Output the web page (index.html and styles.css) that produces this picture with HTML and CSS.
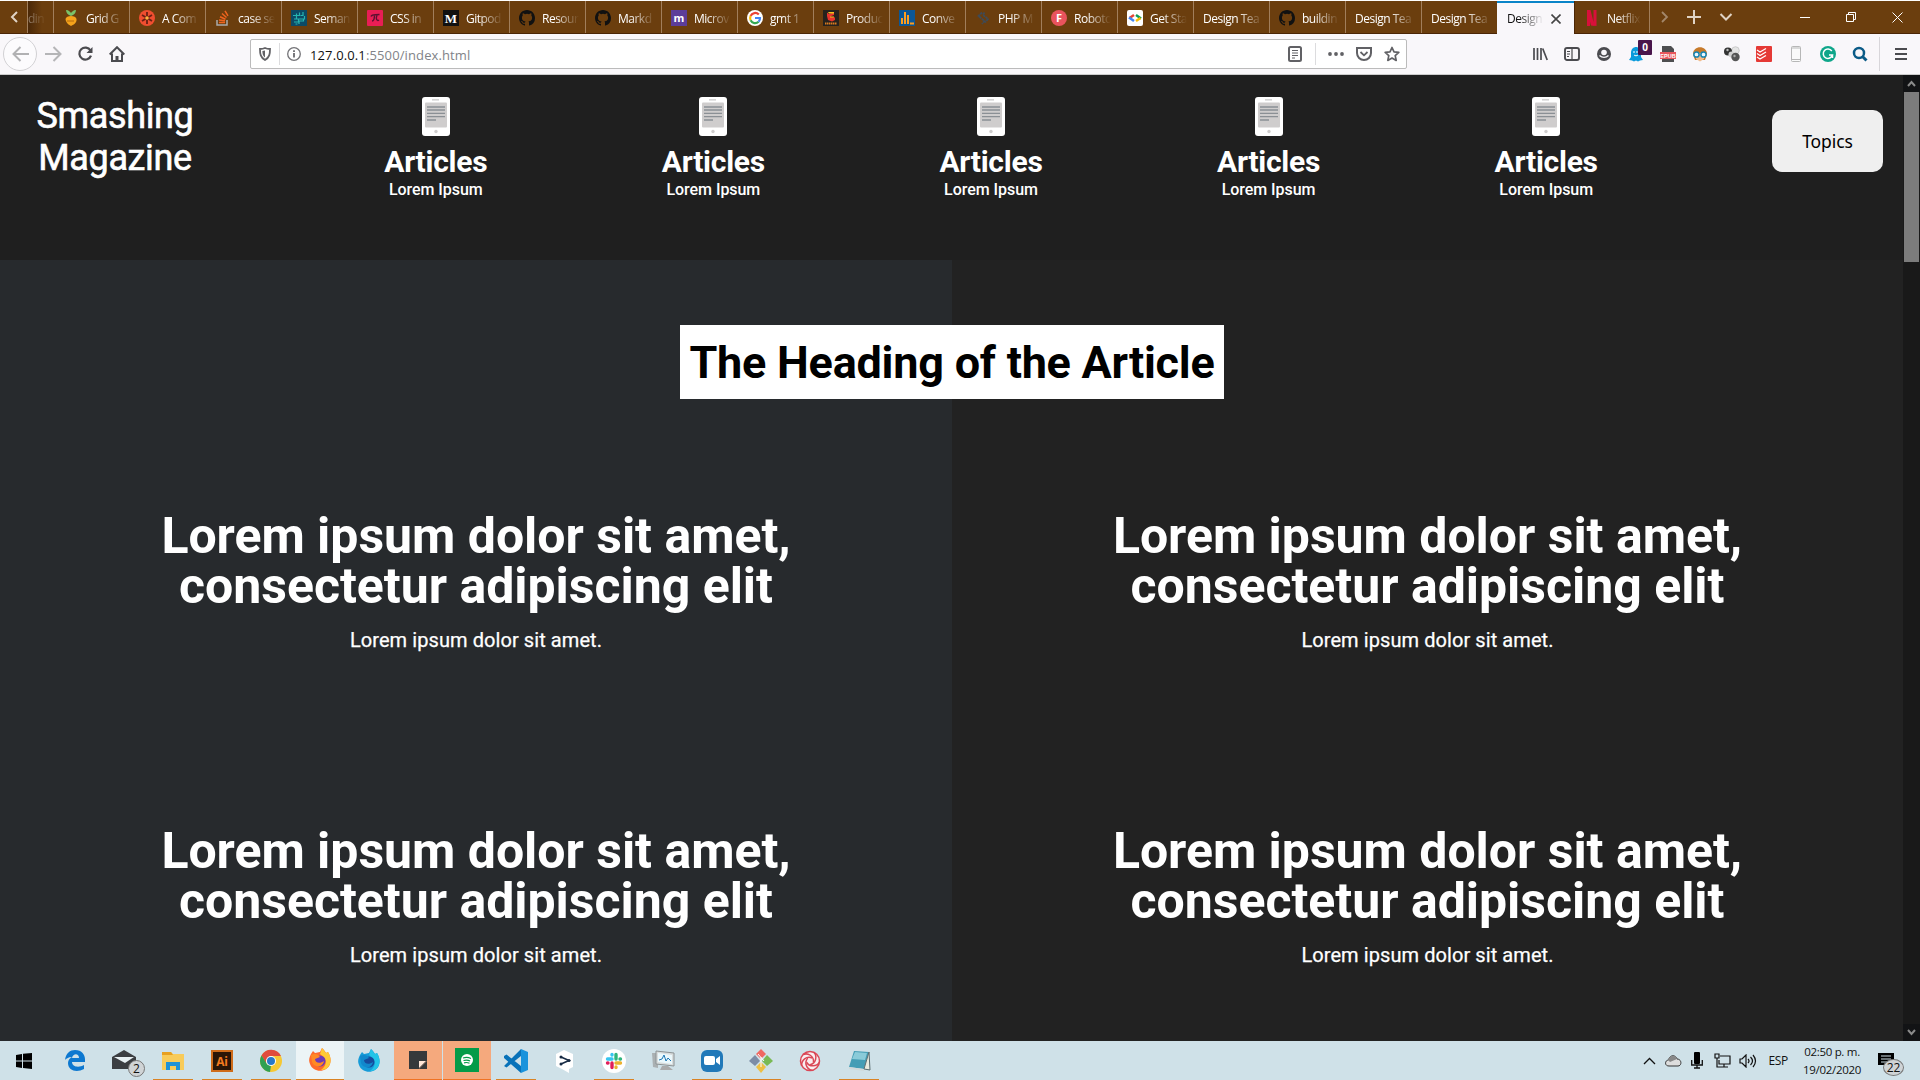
FILE: index.html
```html
<!DOCTYPE html>
<html lang="en">
<head>
<meta charset="utf-8">
<title>Design Team</title>
<link rel="stylesheet" href="styles.css">
</head>
<body>
<svg class="defs" aria-hidden="true">
  <symbol id="github" viewBox="0 0 16 16"><path fill="#111" d="M8 0C3.58 0 0 3.58 0 8c0 3.54 2.29 6.53 5.47 7.59.4.07.55-.17.55-.38 0-.19-.01-.82-.01-1.49-2.01.37-2.53-.49-2.69-.94-.09-.23-.48-.94-.82-1.13-.28-.15-.68-.52-.01-.53.63-.01 1.08.58 1.23.82.72 1.21 1.87.87 2.33.66.07-.52.28-.87.51-1.07-1.78-.2-3.64-.89-3.64-3.95 0-.87.31-1.59.82-2.15-.08-.2-.36-1.02.08-2.12 0 0 .67-.21 2.2.82a7.6 7.6 0 0 1 4 0c1.53-1.04 2.2-.82 2.2-.82.44 1.1.16 1.92.08 2.12.51.56.82 1.27.82 2.15 0 3.07-1.87 3.75-3.65 3.95.29.25.54.73.54 1.48 0 1.07-.01 1.93-.01 2.2 0 .21.15.46.55.38A8 8 0 0 0 16 8c0-4.42-3.58-8-8-8z"/></symbol>
  <symbol id="reader" viewBox="0 0 28 39"><rect width="28" height="39" rx="3" fill="#fff"/><rect x="3" y="5.500" width="22" height="25" rx="1" fill="#cfcdcd"/><path d="M5 10h18M5 13h18M5 16.300h18M5 19.600h18M5 23h9" stroke="#8b9095" stroke-width="1.300"/><rect x="10" y="2" width="7" height="1.600" fill="#d5d5d5"/><circle cx="14" cy="34.500" r="1.700" fill="#cfcdcd"/></symbol>
</svg>

<div class="tabs">
  <div class="tab-scroll"><svg width="8" height="12" viewBox="0 0 8 12"><path d="M7 1 2 6l5 5" fill="none" stroke="#e0d3c5" stroke-width="2"/></svg></div>
  <div class="tab cut"><span>din</span></div>
  <div class="tab"><svg viewBox="0 0 16 16"><path d="M8 6C5 5 3 3 3 0c3 0 4 2 5 3 1-1 2-3 5-3 0 3-2 5-5 6z" fill="#7ac36a"/><path d="M2.500 9C3 5 13 5 13.500 9S10 15 8 16c-2-1-5-3-5.500-7z" fill="#f5a31b"/><path d="M4 11h7" stroke="#b86b0c"/></svg><span>Grid G</span></div>
  <div class="tab"><svg viewBox="0 0 16 16"><circle cx="8" cy="8" r="8" fill="#f04e30"/><path d="M8 2v12M3 5l10 6M3 11l10-6" stroke="#6a2013" stroke-width="1.800"/><circle cx="8" cy="8" r="1.800" fill="#ffb23e"/></svg><span>A Com</span></div>
  <div class="tab"><svg viewBox="0 0 16 16"><path d="M2 10v5h10v-5" fill="none" stroke="#aaa" stroke-width="1.500"/><path d="M4 12.500h6M4 9.900l6 .9M5 6.700l5.500 2.500M7 3.500l4.500 4M10 .8l3 5" stroke="#f0641e" stroke-width="1.500"/></svg><span>case se</span></div>
  <div class="tab"><svg viewBox="0 0 16 16"><rect width="16" height="16" fill="#0c4a66"/><path d="M2 5.500h6.500V2.500M12 2v3.500H9.500M13.500 6v3H3M5.500 9V3.500M3 12h4.500V9M8 14v-3h4.500V9M4.500 14h2" fill="none" stroke="#26b5b0" stroke-width="1.200"/></svg><span>Seman</span></div>
  <div class="tab"><svg viewBox="0 0 16 16"><rect width="16" height="16" rx="1" fill="#e91e55"/><path d="M4 6.500C5 4 7 5 12.500 4.500M7.500 5c0 3-1 6-2.500 6m5-6c-1.500 4 0 6.500 2 5" fill="none" stroke="#5b1130" stroke-width="1.400"/></svg><span>CSS in</span></div>
  <div class="tab"><svg viewBox="0 0 16 16"><rect width="16" height="16" fill="#111"/><text x="8" y="12.500" class="serif">M</text></svg><span>Gitpod</span></div>
  <div class="tab"><svg><use href="#github"/></svg><span>Resour</span></div>
  <div class="tab"><svg><use href="#github"/></svg><span>Markd</span></div>
  <div class="tab"><svg viewBox="0 0 16 16"><rect width="16" height="16" fill="#5c3d99"/><text x="8" y="11.500" class="glyph">m</text></svg><span>Microv</span></div>
  <div class="tab"><svg viewBox="0 0 16 16"><circle cx="8" cy="8" r="8" fill="#fff"/><g fill="none" stroke-width="2.200"><path d="M11.800 4.500A5 5 0 0 0 3.600 6" stroke="#ea4335"/><path d="M3.600 6a5 5 0 0 0 0 4.300" stroke="#fbbc05"/><path d="M3.600 10.300a5 5 0 0 0 8 1.400" stroke="#34a853"/><path d="M11.600 11.700A5 5 0 0 0 13 8H8" stroke="#4285f4"/></g></svg><span>gmt 1</span></div>
  <div class="tab"><svg viewBox="0 0 16 16"><rect width="16" height="16" fill="#26221d"/><path d="M4 2.500 6 4l5-1.500V5L7 6.500l5 1V10l-3 1.500L5 10 4 6z" fill="#e7332b"/><path d="M5 2h6v1.500H6zM7 6.500h4v1H7z" fill="#f4c21f"/><path d="M2 13.500h12" stroke="#d97a20" stroke-width="2" stroke-dasharray="1.500 .5"/></svg><span>Produc</span></div>
  <div class="tab"><svg viewBox="0 0 16 16"><rect width="16" height="16" fill="#0b5796"/><path d="M3 14V8m3 6V2m3 12V5m2 8.500h4" stroke="#ff9d1d" stroke-width="2"/></svg><span>Conve</span></div>
  <div class="tab"><svg viewBox="0 0 16 16"><path d="M7 2.500 3.500 6l6 5-2.500 3M6 8 3.500 6M9.500 2.500 8 5l5 4-3 3.500" fill="none" stroke="#3e4b58" stroke-width="1.800" stroke-dasharray="2.500 .6"/></svg><span>PHP M</span></div>
  <div class="tab"><svg viewBox="0 0 16 16"><circle cx="8" cy="8" r="8" fill="#e9535c"/><text x="8" y="12" class="glyph">F</text></svg><span>Roboto</span></div>
  <div class="tab"><svg viewBox="0 0 16 16"><rect width="16" height="16" rx="2" fill="#fff"/><g stroke-width="2.500" fill="none"><path d="M7 5 2.500 8" stroke="#ea4335"/><path d="m2 7.500 5 3.500" stroke="#4285f4"/><path d="m9 5 5 3.500" stroke="#0f9d58"/><path d="M13.500 8 9 11" stroke="#fbbc05"/></g></svg><span>Get Sta</span></div>
  <div class="tab"><span>Design Tea</span></div>
  <div class="tab"><svg><use href="#github"/></svg><span>buildin</span></div>
  <div class="tab"><span>Design Tea</span></div>
  <div class="tab"><span>Design Tea</span></div>
  <div class="tab active"><span>Design</span><svg class="close" viewBox="0 0 10 10"><path d="m.5.500 9 9m0-9-9 9" stroke="#444" stroke-width="1.600"/></svg></div>
  <div class="tab"><svg viewBox="0 0 16 16"><path d="M3 0h3.500l4 16L7 15.500 3 0zM3 0h3v16l-3 .1zM9.500 0h3v16l-3-.4z" fill="#d8103a"/></svg><span>Netflix</span></div>
  <div class="tab-tools">
    <svg width="8" height="12" viewBox="0 0 8 12"><path d="m1 1 5 5-5 5" fill="none" stroke="#a3876a" stroke-width="1.800"/></svg>
    <svg width="14" height="14" viewBox="0 0 14 14"><path d="M7 0v14M0 7h14" stroke="#e0d3c5" stroke-width="2"/></svg>
    <svg width="14" height="8" viewBox="0 0 14 8"><path d="m1.500 1 5.500 5.500L12.500 1" fill="none" stroke="#e0d3c5" stroke-width="2"/></svg>
  </div>
  <div class="win">
    <svg width="11" height="11"><path d="M0 5.500h10" stroke="#fff"/></svg>
    <svg width="11" height="11"><path d="M.5 2.500h7v7h-7zM2.500 2V.5h7v7H8" fill="none" stroke="#fff"/></svg>
    <svg width="11" height="11"><path d="m.5.500 10 10m0-10-10 10" stroke="#fff"/></svg>
  </div>
</div>

<div class="toolbar">
  <div class="nav">
    <div class="back"><svg width="17" height="16" viewBox="0 0 17 16"><path d="M17 8H2m6.500-7L1.500 8l7 7" fill="none" stroke="#b1b1b3" stroke-width="2"/></svg></div>
    <svg width="17" height="16" viewBox="0 0 17 16"><path d="M0 8h15M8.500 1l7 7-7 7" fill="none" stroke="#b5b5b7" stroke-width="2"/></svg>
    <svg width="16" height="16" viewBox="0 0 16 16"><path d="M13.500 4.500A6 6 0 1 0 14 9.700" fill="none" stroke="#4b4b4f" stroke-width="2.200"/><path d="M15.500 1v6H9.500z" fill="#4b4b4f"/></svg>
    <svg width="16" height="16" viewBox="0 0 16 16"><path d="M.7 8.500 8 1.200l7.300 7.300M3 7.500V15h10V7.500" fill="none" stroke="#4b4b4f" stroke-width="2"/><path d="M6.500 15v-5h3v5z" fill="#4b4b4f"/></svg>
  </div>
  <div class="url">
    <svg width="12" height="14" viewBox="0 0 12 14"><path d="M1 2c2 0 3.500-.3 5-1 1.500.7 3 1 5 1 0 5-.5 8.500-5 11C1.500 10.500 1 7 1 2z" fill="none" stroke="#616165" stroke-width="1.800"/><path d="M6 3.500v7C3.800 9 3.400 7 3.400 4z" fill="#616165"/></svg>
    <i class="line"></i>
    <svg class="info" width="14" height="14" viewBox="0 0 14 14"><circle cx="7" cy="7" r="6.300" fill="none" stroke="#737377" stroke-width="1.300"/><path d="M7 6v4.500M7 3.300v1.600" stroke="#616165" stroke-width="1.700"/></svg>
    <p class="address">127.0.0.1<span>:5500/index.html</span></p>
    <div class="url-tools">
      <svg width="14" height="16" viewBox="0 0 14 16"><rect x="1" y="1" width="12" height="14" rx="1.500" fill="none" stroke="#616165" stroke-width="2"/><path d="M4 4.500h6M4 7h6M4 9.500h6M4 12h3" stroke="#616165"/></svg>
      <i class="line"></i>
      <svg width="16" height="4"><g fill="#616165"><circle cx="2" cy="2" r="1.900"/><circle cx="8" cy="2" r="1.900"/><circle cx="14" cy="2" r="1.900"/></g></svg>
      <svg width="16" height="14" viewBox="0 0 16 14"><path d="M1 1h14v5a7 7 0 0 1-14 0z" fill="none" stroke="#616165" stroke-width="2"/><path d="m4.500 5 3.500 3.300L11.500 5" fill="none" stroke="#616165" stroke-width="1.800"/></svg>
      <svg width="16" height="16" viewBox="0 0 16 16"><path d="m8 1.500 2 4.400 4.800.5-3.600 3.200 1 4.800L8 12l-4.200 2.400 1-4.800L1.200 6.400 6 5.900z" fill="none" stroke="#616165" stroke-width="1.700" stroke-linejoin="round"/></svg>
    </div>
  </div>
  <div class="extras">
    <svg viewBox="0 0 16 16"><path d="M2 2v12M5.500 2v12M9 2v12M10.700 2.500l4.500 11.500" stroke="#4b4b4f" stroke-width="1.700"/></svg>
    <svg viewBox="0 0 16 16"><rect x="1" y="2" width="14" height="12" rx="2" fill="none" stroke="#4b4b4f" stroke-width="1.900"/><path d="M8 2v12M3 5.500h3M3 8h3M3 10.500h2" stroke="#4b4b4f" stroke-width="1.200"/></svg>
    <svg viewBox="0 0 16 16"><circle cx="8" cy="8" r="7" fill="#4b4b4f"/><circle cx="8" cy="6.500" r="2.800" fill="#f9f7fa"/><path d="M3.500 9.500c2.500 2.600 6.500 2.600 9 0" fill="none" stroke="#f9f7fa" stroke-width="1.300"/></svg>
    <div class="ghost"><svg viewBox="0 0 16 16"><path d="M3 7c0-8 10-8 10 0v4l2 3-3 .5-2 1-2-1-2 1-2-1-3-.5 2-3z" fill="#0a9bdc"/><path d="M6 5v2M9 5v2M6 9c1 1 3 1 4 0" stroke="#fff" fill="none"/></svg><b>0</b></div>
    <svg viewBox="0 0 16 16"><path d="M2 0h9l3 3v13H2z" fill="#4e4e50"/><rect y="6" width="16" height="7" fill="#e8575d"/><text x="8" y="11.600" class="epub">EPUB</text></svg>
    <svg viewBox="0 0 16 16"><path d="M1 8c0-9 14-9 14 0l-2 6H3z" fill="#c77a2b"/><path d="M4 7h8v6l-4 2.500L4 13z" fill="#f2bd8d"/><circle cx="4.500" cy="8.500" r="2.600" fill="#e8f7ff" stroke="#1786b5" stroke-width="1.500"/><circle cx="11.500" cy="8.500" r="2.600" fill="#e8f7ff" stroke="#1786b5" stroke-width="1.500"/></svg>
    <svg viewBox="0 0 16 16"><circle cx="11.500" cy="4.500" r="3.800" fill="#e4e4e4" stroke="#aaa" stroke-width=".5"/><circle cx="4" cy="5.500" r="4" fill="#333"/><circle cx="7.500" cy="8.500" r="3" fill="#d2d2d2"/><circle cx="11.500" cy="11" r="4.200" fill="#555"/><circle cx="3.500" cy="4" r="1.200" fill="#bbb"/><circle cx="10.500" cy="10" r="1.200" fill="#aaa"/></svg>
    <svg viewBox="0 0 16 16"><rect width="16" height="16" rx="1" fill="#e53935"/><path d="m1 4 3 2 6-3.500M1 7.500l3 2L10 6M1 11l3 2 6-3.500" fill="none" stroke="#fff" stroke-width="1.300"/></svg>
    <svg viewBox="0 0 16 16"><rect x="3.500" y=".5" width="9" height="15" rx="1" fill="#fafafa" stroke="#b7b7b7"/><path d="M4 2h8M4 13.500h8" stroke="#b7b7b7"/></svg>
    <svg viewBox="0 0 16 16"><circle cx="8" cy="8" r="8" fill="#0fa68a"/><path d="M11.800 5A4.700 4.700 0 1 0 12.500 9H9m3.500 0v3" fill="none" stroke="#fff" stroke-width="1.500"/></svg>
    <svg viewBox="0 0 16 16"><circle cx="7" cy="7" r="5" fill="none" stroke="#0b5b87" stroke-width="2.500"/><path d="m10.500 10.500 4 4" stroke="#0b5b87" stroke-width="3"/></svg>
  </div>
  <div class="burger"><svg width="12" height="12"><path d="M0 1h12M0 6h12M0 11h12" stroke="#4b4b4f" stroke-width="1.800"/></svg></div>
</div>

<div class="viewport">
  <div class="page">
    <header>
      <h1>Smashing Magazine</h1>
      <nav>
        <div class="item"><svg><use href="#reader"/></svg><h3>Articles</h3><p>Lorem Ipsum</p></div>
        <div class="item"><svg><use href="#reader"/></svg><h3>Articles</h3><p>Lorem Ipsum</p></div>
        <div class="item"><svg><use href="#reader"/></svg><h3>Articles</h3><p>Lorem Ipsum</p></div>
        <div class="item"><svg><use href="#reader"/></svg><h3>Articles</h3><p>Lorem Ipsum</p></div>
        <div class="item"><svg><use href="#reader"/></svg><h3>Articles</h3><p>Lorem Ipsum</p></div>
      </nav>
      <button>Topics</button>
    </header>
    <main>
      <h2 class="heading">The Heading of the Article</h2>
      <section class="column slate">
        <article><h2>Lorem ipsum dolor sit amet, consectetur adipiscing elit</h2><p>Lorem ipsum dolor sit amet.</p></article>
        <article><h2>Lorem ipsum dolor sit amet, consectetur adipiscing elit</h2><p>Lorem ipsum dolor sit amet.</p></article>
      </section>
      <section class="column">
        <article><h2>Lorem ipsum dolor sit amet, consectetur adipiscing elit</h2><p>Lorem ipsum dolor sit amet.</p></article>
        <article><h2>Lorem ipsum dolor sit amet, consectetur adipiscing elit</h2><p>Lorem ipsum dolor sit amet.</p></article>
      </section>
    </main>
  </div>
  <div class="scrollbar">
    <svg viewBox="0 0 17 17"><path d="m5 11 3.500-4L12 11" fill="none" stroke="#8a8a8a" stroke-width="2"/></svg>
    <div class="thumb"></div>
    <svg viewBox="0 0 17 17"><path d="m5 6 3.500 4L12 6" fill="none" stroke="#8a8a8a" stroke-width="2"/></svg>
  </div>
</div>

<footer class="taskbar">
  <div class="app start"><svg viewBox="0 0 24 24"><path d="m4 6 6-1v6.500H4zM11 4.800 20 4v7.500h-9zM4 12.500h6V19l-6-1zM11 12.500h9V20l-9-.9z"/></svg></div>
  <div class="app"><svg viewBox="0 0 24 24"><path d="M2 11C3 4 7 1 12 1c7 0 10 5 10 9v3H9c0 5 7 6 12 3v4c-7 4-16 2-16-6 0-3 2-5 4-6-4 0-6 2-7 3zm7-2h7c0-5-6-5-7 0z" fill="#0d78d0"/></svg></div>
  <div class="app mail"><svg viewBox="0 0 24 24"><path d="M0 8 12 1l12 7v12H0z" fill="#3b3e42"/><path d="M2 8h20l-9 6z" fill="#e8f1f4"/></svg><b class="badge">2</b></div>
  <div class="app open"><svg viewBox="0 0 24 24"><path d="M1 3h9l2 2h11v16H1z" fill="#f8cb59"/><path d="M1 3h9l2 3H1z" fill="#e7a021"/><path d="M5 21v-8h14v8h-4v-4H9v4z" fill="#1f92d6"/></svg></div>
  <div class="app open"><svg viewBox="0 0 24 24"><rect x="2" y="2" width="20" height="20" fill="#2b1607" stroke="#cf6c1a" stroke-width="2"/><text x="12" y="16.500" class="ai">Ai</text></svg></div>
  <div class="app open"><svg viewBox="0 0 24 24"><circle cx="12" cy="12" r="11" fill="#f6c833"/><path d="M2.500 6.500A11 11 0 0 1 22 7H12L7 14z" fill="#e04b3c"/><path d="M2.500 6.500 8 15l4 1.500L11 23A11 11 0 0 1 2.500 6.500z" fill="#2fa052"/><circle cx="12" cy="12" r="5" fill="#fff"/><circle cx="12" cy="12" r="4" fill="#2878c8"/></svg></div>
  <div class="app current"><svg viewBox="0 0 24 24"><path d="M3 6 5 3l2 2c2 0 3-1 5-1l2-4c2 2 3 3 4 5l2-1c3 5 3 9 2 12-3 9-17 9-20 0C0 12 2 8 3 6z" fill="#ff6a2b"/><path d="m14 0 4 5 2-1c3 5 3 9 2 12-2 5-6 6-9 6 7-5 6-12-1-16z" fill="#ffca35"/><circle cx="12" cy="13" r="5.500" fill="#6e3bb5"/><path d="M3 7c4-2 7-1 9 2l-5 2c0 4 5 5 9 2-1 7-10 7-12 1z" fill="#ff8a23"/></svg></div>
  <div class="app"><svg viewBox="0 0 24 24"><path d="M3 6 5 3l2 2c2 0 3-1 5-1l2-4c2 2 3 3 4 5l2-1c3 5 3 9 2 12-3 9-17 9-20 0C0 12 2 8 3 6z" fill="#169bd8"/><path d="m14 0 4 5 2-1c3 5 3 9 2 12-2 5-6 6-9 6 7-5 6-12-1-16z" fill="#23c4e8"/><circle cx="12" cy="13" r="5.500" fill="#164c9d"/><path d="M3 7c4-2 7-1 9 2l-5 2c0 4 5 5 9 2-1 7-10 7-12 1z" fill="#1188cc"/></svg></div>
  <div class="app alert"><svg viewBox="0 0 24 24"><path d="M3 3h18v10l-8 8H3z" fill="#36393b"/><path d="M21 13v8h-8z" fill="#36393b"/><path d="M13 20v-7h7z" fill="#ffe7d8"/></svg></div>
  <div class="app alert"><svg viewBox="0 0 24 24"><path fill="#049b48" d="M0 0h24v24H0z"/><circle cx="12" cy="12" r="6" fill="#fff"/><path d="M8 10c3-1 6-.5 8 .5M8.500 12.500c2.500-.7 5-.4 6.500.5M9 14.800c2-.5 4-.3 5.500.4" fill="none" stroke="#049b48" stroke-width="1.200"/></svg></div>
  <div class="app open"><svg viewBox="0 0 24 24"><path d="m0 7 2.500-1.500L17 17v7L0 9zM17 0v7L2.500 18.500 0 17z" fill="#0872b9"/><path d="m17 0 7 3v18l-7 3z" fill="#1a93dc"/></svg></div>
  <div class="app"><svg viewBox="0 0 24 24"><path d="m11 1 9 4v13l-4 2v4l-7-4-6-3V5z" fill="#fff"/><path d="m8 8 8 3.500L8 15" fill="none" stroke="#172b44" stroke-width="1.600"/><g fill="#172b44"><circle cx="8" cy="8" r="1.500"/><circle cx="16" cy="11.500" r="1.500"/><circle cx="8" cy="15" r="1.500"/></g></svg></div>
  <div class="app open"><svg viewBox="0 0 24 24"><circle cx="12" cy="12" r="12" fill="#fff"/><g stroke-width="3.400" stroke-linecap="round"><path d="M5.500 10h4.500M10 5.500v.5" stroke="#36c5f0"/><path d="M14 5.500V10M18.500 10h-.5" stroke="#2eb67d"/><path d="M18.500 14H14M14 18.500v-.5" stroke="#ecb22e"/><path d="M10 18.500V14M5.500 14h.5" stroke="#e01e5a"/></g></svg></div>
  <div class="app"><svg viewBox="0 0 24 24"><path d="M1 4h6v15l-5-1z" fill="#aab0b2"/><path d="m5 2 18 2v13L5 15z" fill="#d9dddd" stroke="#8b9294"/><path d="m7 4 14 2v9L7 13z" fill="#eaf8fc"/><path d="m8 11 3-1 2-4 2 6 2-3 3 3" fill="none" stroke="#1c77b5"/><path d="M11 17h6l5 4H9z" fill="#aaa"/></svg></div>
  <div class="app open"><svg viewBox="0 0 24 24"><rect x="1" y="1" width="22" height="22" rx="6" fill="#2179b9"/><rect x="4" y="7" width="11" height="9" rx="2" fill="#fff"/><path d="m16 10 4-3v9l-4-3z" fill="#fff"/></svg></div>
  <div class="app open"><svg viewBox="0 0 24 24"><path d="m12 0 5 5-5 5-5-5z" fill="#ef6861"/><path d="m6 6 5 6-5 5-6-5z" fill="#7c8ca6"/><path d="m18 6 6 6-6 5-5-5z" fill="#79ba54"/><path d="m12 13 5 5-5 6-5-6z" fill="#edbf45"/><path d="m9 5 6 7m-3-4v10" stroke="#fff"/></svg></div>
  <div class="app"><svg viewBox="0 0 24 24"><circle cx="12" cy="12" r="10" fill="#f9eef0"/><g fill="none" stroke="#da4756" stroke-width="1.500"><circle cx="12" cy="12" r="9.500"/><path id="petal" d="M5 5.500C10 3.500 16 7 15.500 13"/><use href="#petal" transform="rotate(72 12 12)"/><use href="#petal" transform="rotate(144 12 12)"/><use href="#petal" transform="rotate(216 12 12)"/><use href="#petal" transform="rotate(288 12 12)"/></g></svg></div>
  <div class="app open"><svg viewBox="0 0 24 24"><path d="m7 2 15 1-5 17-15-2z" fill="#449db5"/><path d="m8 3 12 1-2 7L5 10z" fill="#8acbd9"/><path d="m22 3 1 18-6-1z" fill="#e7eadf" stroke="#596b6f"/><path d="M2 18 17 20v2L2 20z" fill="#d0d9da"/></svg></div>
  <div class="tray">
    <svg width="13" height="8"><path d="m1 7 5.500-5.500L12 7" fill="none" stroke="#111" stroke-width="1.300"/></svg>
    <svg width="17" height="12"><path d="M4 11c-5 0-4-6-.5-6C5-1 11 0 12 4c5 0 5 7 1 7z" fill="#ddd" stroke="#333"/><path d="M3 5c2-6 8-4 9-1L5 7z" fill="#888"/></svg>
    <svg width="12" height="17"><rect x="3" width="6" height="12" rx="1"/><path d="M.7 8v5h10.600V8M6 13v3M3 16h6" fill="none" stroke="#111" stroke-width="1.300"/></svg>
    <svg width="17" height="15"><path d="M6 3h10v8H5V7M10 11v3M6 14h8M1 1h4v4H1zm2 4v9h3" fill="none" stroke="#111" stroke-width="1.200"/></svg>
    <svg width="18" height="14"><path d="M1 5h2l4-4v12L3 9H1zM9 5q2 2 0 4M11.500 3q4 4 0 8M14 1q5 6 0 12" fill="none" stroke="#111" stroke-width="1.200"/></svg>
  </div>
  <span class="lang">ESP</span>
  <div class="clock"><span>02:50 p. m.</span><span>19/02/2020</span></div>
  <div class="notify"><svg width="17" height="16"><path d="M0 0h16v12h-5l-3 3v-3H0z"/><path d="M3 3h10M3 6h10M3 9h7" stroke="#cfe0e6"/></svg><b class="badge">22</b></div>
</footer>
</body>
</html>
```
FILE: styles.css
```css
* { box-sizing: border-box; }
body { margin: 0; width: 1920px; height: 1080px; overflow: hidden; display: flex; flex-direction: column; background: #202020; font-family: "Open Sans", "Noto Sans", sans-serif; }
h1, h2, h3, p { margin: 0; }
svg { display: block; flex: none; }
.defs { position: absolute; width: 0; height: 0; }

/* tab strip */
.tabs { height: 34px; flex: none; display: flex; background: #6b3e0e; border-top: 1px solid #fff; border-bottom: 1px solid #4b2606; }
.tab-scroll { width: 27px; display: grid; place-items: center; }
.tab { width: 76px; flex: none; border-left: 1px solid #a17e5b; padding: 2px 0 0 9px; display: flex; align-items: center; gap: 7px; color: #fff; font-size: 12px; }
.tab svg { width: 16px; height: 16px; }
.tab span { flex: 1; min-width: 0; white-space: nowrap; margin-right: 6px; letter-spacing: -.5px; mask-image: linear-gradient(to right, #000 calc(100% - 25px), transparent); }
.tab.cut { width: 26px; padding-left: 0; background: linear-gradient(to right, #4a2808, #6b3e0e 14px); }
.tab.cut span { opacity: .5; margin-right: 6px; }
.tab.active { width: 77px; background: #f9f7fa; color: #111; border-left: 0; border-top: 2px solid #0a84c8; margin-bottom: -1px; padding-top: 0; padding-left: 10px; }
.tab.active span { margin-right: 0; }
.tab .close { width: 10px; height: 10px; margin-right: 13px; }
.tab.active + .tab { border-left-color: #4b2606; padding-left: 9px; border-right: 1px solid #a17e5b; }
.tab.active + .tab span { margin-right: 8px; }
.tab-tools { display: flex; align-items: center; gap: 20px; padding-left: 11px; }
.tab-tools svg:nth-child(2) { margin-right: -6px; margin-left: -2px; }
.tab-tools svg:nth-child(3) { margin-left: 4px; }
.win { margin-left: auto; display: flex; align-items: center; gap: 35px; padding-right: 17px; }
.serif { font: bold 13px "Liberation Serif", serif; fill: #fff; text-anchor: middle; }
.glyph { font: bold 11px "Open Sans", sans-serif; fill: #fff; text-anchor: middle; }
.epub { font: bold 5.500px "Liberation Sans", sans-serif; fill: #fff; text-anchor: middle; }
.ai { font: bold 12px "Open Sans", sans-serif; fill: #f47b20; text-anchor: middle; }

/* navigation toolbar */
.toolbar { height: 41px; flex: none; display: flex; align-items: center; background: #f9f7fa; border-bottom: 1px solid #ccc; }
.nav { width: 250px; flex: none; display: flex; align-items: center; gap: 15.500px; padding-left: 3px; }
.nav .back { width: 34px; height: 34px; border: 1px solid #d2d1d4; border-radius: 50%; display: grid; place-items: center; background: #fcfbfd; margin-right: -8px; }
.url { width: 1157px; flex: none; height: 30px; border: 1px solid #bbb; border-radius: 2px; background: #fff; display: flex; align-items: center; padding-left: 8px; }
.line { width: 1px; height: 22px; background: #dcdcde; margin-left: 8px; }
.info { margin: 0 9px 0 7px; }
.address { font-size: 13px; color: #111; letter-spacing: .12px; padding-top: 1px; }
.address span { color: #818388; }
.url-tools { margin-left: auto; display: flex; align-items: center; gap: 12px; padding-right: 6px; }
.url-tools .line { margin: 0 0 0 1px; }
.extras { display: flex; align-items: center; gap: 16px; margin-left: 125px; }
.extras svg { width: 16px; height: 16px; }
.ghost { position: relative; }
.ghost b { position: absolute; left: 10px; top: -6px; width: 14px; height: 15px; background: #49154b; color: #fff; font-size: 10px; line-height: 15px; text-align: center; border-radius: 1px; }
.burger { margin-left: 11px; padding: 11px 15px; border-left: 1px solid #d8d6da; }

/* web page */
.viewport { height: 966px; flex: none; display: flex; overflow: hidden; }
.page { width: 1903px; height: 966px; font-family: Roboto, sans-serif; color: #fff; display: flex; flex-direction: column; }
header { height: 185px; flex: none; display: flex; background: #1f1f1f; }
h1 { width: 230px; margin-right: 67px; padding: 20px 30px 0; text-align: center; font-size: 36px; line-height: 42px; font-weight: 400; letter-spacing: -.35px; -webkit-text-stroke: .6px #fff; }
nav { width: 1388px; display: grid; grid-template-columns: repeat(5, 1fr); }
.item { display: flex; flex-direction: column; align-items: center; padding-top: 22px; }
.item svg { width: 28px; height: 39px; }
.item h3 { font-size: 30px; line-height: 35px; margin-top: 8px; letter-spacing: -.25px; }
.item p { font-size: 16px; line-height: 20px; margin-top: 1px; font-weight: 500; letter-spacing: -.05px; }
button { width: 111px; height: 62px; margin: 35px 0 0 87px; border: 0; border-radius: 10px; background: #efefef; font: 17.500px "Noto Sans", sans-serif; letter-spacing: -.1px; color: #000; padding: 0; }
main { flex: 1; min-height: 0; display: grid; grid-template-columns: 952px 951px; grid-template-rows: 781px; position: relative; }
.heading { position: absolute; left: 680px; top: 65px; width: 544px; height: 74px; background: #fff; color: #000; text-align: center; font-size: 45px; line-height: 75px; letter-spacing: -.24px; white-space: nowrap; }
.column { background: #222; padding-top: 251px; overflow: hidden; }
.column.slate { background: #272a2d; }
article { height: 315px; text-align: center; }
article h2 { width: 640px; margin: 0 auto; font-size: 50px; line-height: 50px; letter-spacing: -.02px; }
article p { font-size: 20px; line-height: 24px; margin-top: 17px; letter-spacing: .08px; -webkit-text-stroke: .25px #fff; }
.scrollbar { width: 17px; background: #191919; display: flex; flex-direction: column; }
.scrollbar svg { width: 17px; height: 17px; background: #121315; }
.scrollbar svg:last-child { margin-top: auto; }
.thumb { height: 170px; width: 15px; margin-left: 1px; background: #7c7c7c; }

/* desktop taskbar */
.taskbar { height: 39px; flex: none; display: flex; background: #cfe1e8; font-size: 12px; letter-spacing: -.3px; color: #111; padding-left: 2px; }
.app { width: 48px; height: 39px; flex: none; margin-right: 1px; display: grid; place-items: center; position: relative; }
.app svg { width: 24px; height: 24px; }
.app.start { padding-right: 4px; }
.app.open { background: linear-gradient(#d98324, #d98324) center bottom / 40px 1px no-repeat; }
.app.current { background: #ecf4f6; border-bottom: 1px solid #d98324; }
.app.alert { background: #f5a97d; border-bottom: 1px solid #f07323; }
.badge { position: absolute; width: 17px; height: 17px; border-radius: 50%; border: 1px solid #777; background: #d0d4d6; font-weight: 400; font-size: 12px; line-height: 15px; text-align: center; letter-spacing: 0; }
.mail .badge { left: 28px; top: 19px; }
.tray { margin-left: auto; display: flex; align-items: center; gap: 9px; }
.tray svg:nth-child(3) { margin-right: 2px; }
.tray svg:nth-child(5) { margin-left: -1px; }
.lang { margin-left: 11px; align-self: center; }
.clock { width: 58px; margin-left: 15px; display: flex; flex-direction: column; align-items: center; justify-content: center; line-height: 18px; white-space: nowrap; font-size: 11.500px; }
.notify { position: relative; width: 42px; margin-left: 17px; padding-top: 12px; }
.notify .badge { left: 5px; top: 18px; width: 21px; }
```
